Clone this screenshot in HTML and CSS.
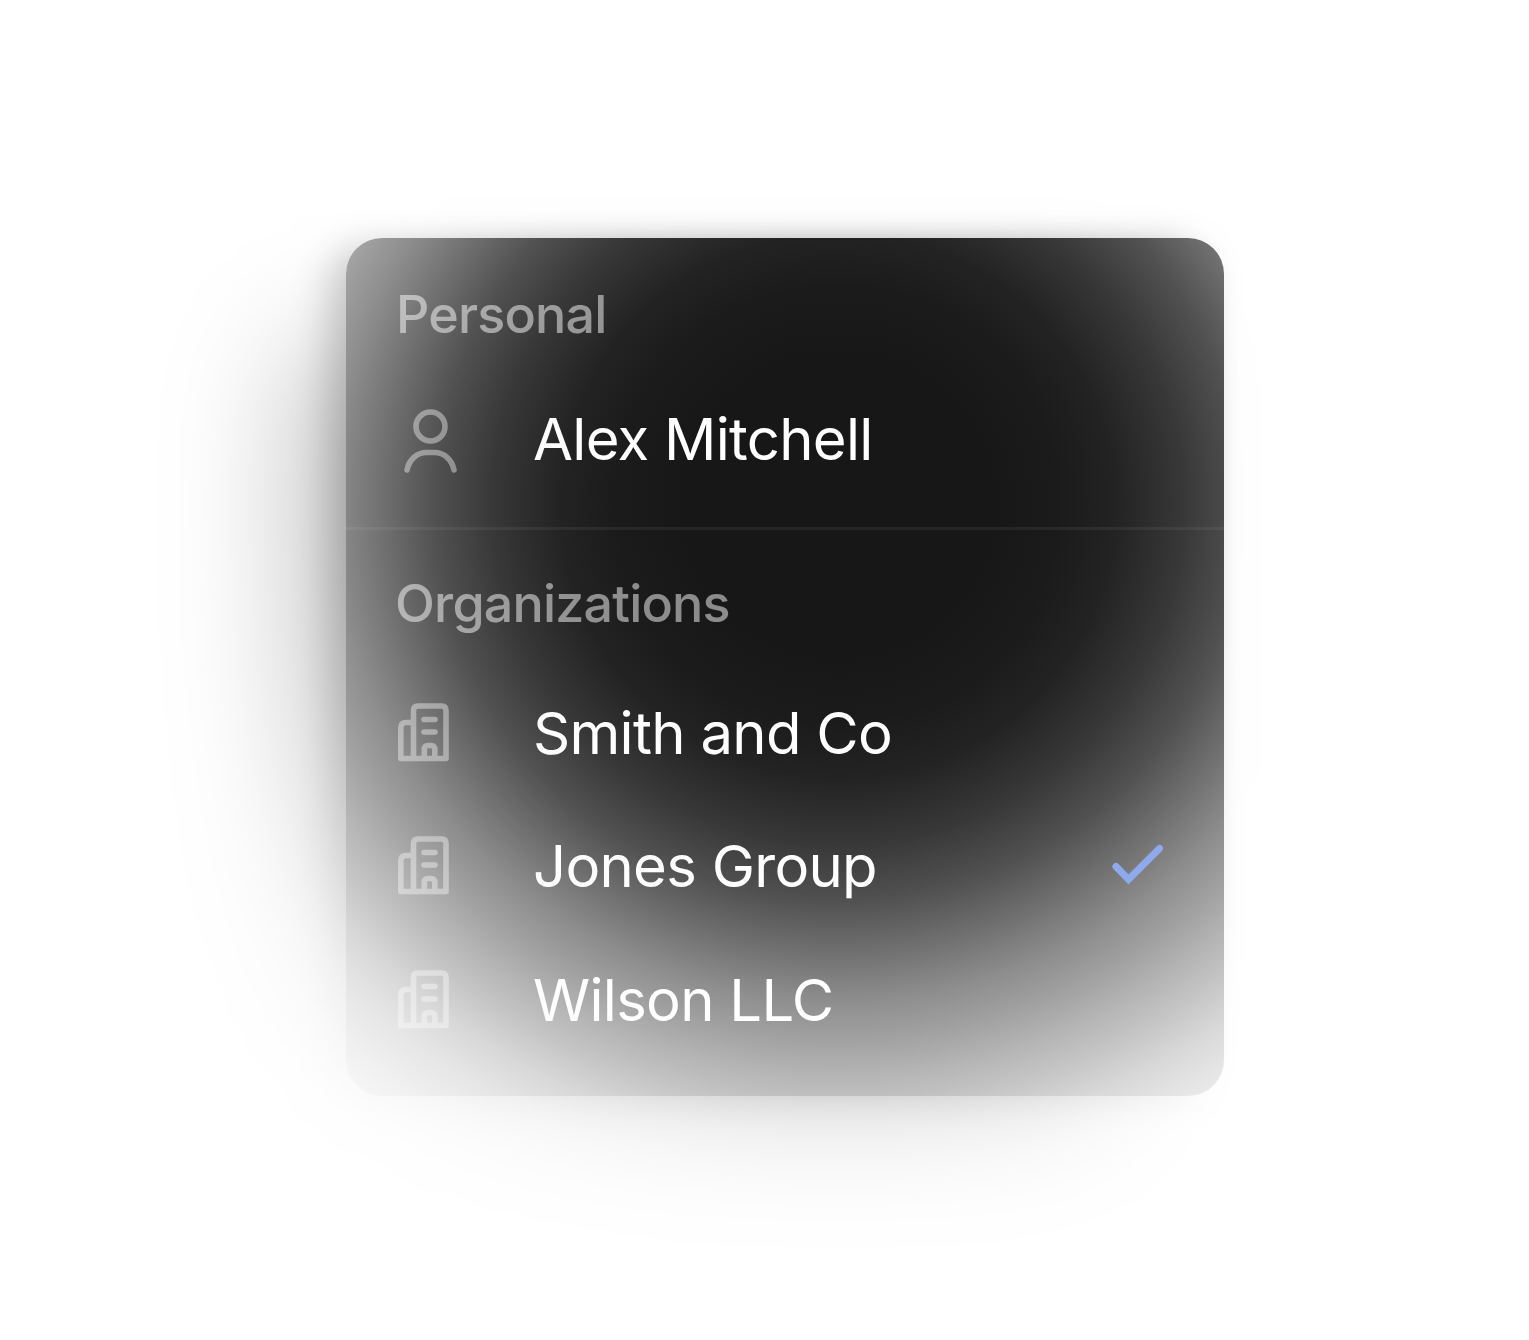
FILE: index.html
```html
<!DOCTYPE html>
<html lang="en">
<head>
    <meta charset="UTF-8">
    <title>Account Switcher</title>
    <link rel="stylesheet" href="styles.css">
</head>
<body>
    <svg class="sprite">
        <symbol id="user" viewBox="0 0 60 72">
            <circle cx="32.5" cy="23.5" r="14.5"/>
            <path d="M9 67C11 56.500 19 49.500 28.500 49.500h8c9.500 0 17.500 7 19.500 17.500"/>
        </symbol>
        <symbol id="building" viewBox="0 0 60 72">
            <path d="M2.800 61.500V31q0-5.500 5.500-5.500H15.500M15.500 61.500V13.500q0-4.500 4.500-4.500h23.500q4.500 0 4.500 4.500v48zM2.800 61.500H15.500M26 22.500h11M26 35h11M26.300 61.500v-9q0-4 4-4h2.500q4 0 4 4v9"/>
        </symbol>
    </svg>

    <div class="glow"><div class="glow-shape"></div></div>

    <div class="menu">
        <div class="section">
            <div class="label">Personal</div>
            <div class="item">
                <svg class="icon"><use href="#user"/></svg>
                <span class="name">Alex Mitchell</span>
            </div>
        </div>

        <div class="section organizations">
            <div class="label">Organizations</div>
            <div class="item">
                <svg class="icon"><use href="#building"/></svg>
                <span class="name">Smith and Co</span>
            </div>
            <div class="item">
                <svg class="icon"><use href="#building"/></svg>
                <span class="name">Jones Group</span>
                <svg class="check" viewBox="0 0 52 42"><path d="M5 22.500l12.500 13L48.500 4.500"/></svg>
            </div>
            <div class="item">
                <svg class="icon"><use href="#building"/></svg>
                <span class="name">Wilson LLC</span>
            </div>
        </div>
    </div>
</body>
</html>
```
FILE: styles.css
```css
* {
    box-sizing: border-box;
}
body {
    margin: 0;
    height: 1340px;
    padding: 238px 0 0 346px;
    background-color: #fff;
    font-family: Inter, sans-serif;
    overflow: hidden;
}
.sprite {
    display: none;
}

/* soft shadow that fades out with the menu fill */
.glow {
    position: absolute;
    inset: 0;
    padding: 238px 0 0 346px;
    mask-image: radial-gradient(842px 826px at 838px 505px, #000 18%, rgba(0,0,0,.96) 31%, rgba(0,0,0,.86) 41%, rgba(0,0,0,.76) 48%, rgba(0,0,0,.63) 54%, rgba(0,0,0,.49) 60%, rgba(0,0,0,.4) 65%, rgba(0,0,0,.32) 69%, rgba(0,0,0,.25) 73%, rgba(0,0,0,.17) 77.5%, rgba(0,0,0,.1) 82%, rgba(0,0,0,.055) 87%, rgba(0,0,0,.02) 93%, transparent);
}
.glow-shape {
    width: 878px;
    height: 858px;
    border-radius: 36px;
    box-shadow: -20px 8px 36px rgba(0,0,0,.45), -95px 90px 120px rgba(0,0,0,.37);
}

.menu {
    position: relative;
    width: 878px;
    height: 858px;
    border-radius: 36px;
    overflow: hidden;
    color: #fff;
    background: radial-gradient(842px 826px at 492px 267px, #171717 18%, rgba(23,23,23,.985) 26%, rgba(23,23,23,.95) 33%, rgba(23,23,23,.86) 41%, rgba(23,23,23,.75) 48%, rgba(23,23,23,.62) 54%, rgba(23,23,23,.49) 60%, rgba(23,23,23,.4) 65%, rgba(23,23,23,.32) 69%, rgba(23,23,23,.25) 73%, rgba(23,23,23,.17) 77.5%, rgba(23,23,23,.11) 82%, rgba(23,23,23,.065) 87%, rgba(23,23,23,.025) 93%, rgba(23,23,23,0)) #fff;
}
.section {
    padding: 18px 50px 28px;
}
.organizations {
    padding-top: 15px;
    border-top: 3px solid rgba(255,255,255,.06);
}
.label {
    height: 118px;
    margin-bottom: 4px;
    line-height: 118px;
    font-size: 52px;
    font-weight: 500;
    letter-spacing: -.8px;
    color: rgba(255,255,255,.5);
}
.organizations .label {
    margin: 0 0 9px -1px;
}
.item {
    display: flex;
    align-items: center;
    height: 121px;
}
.item + .item {
    margin-top: 12.500px;
}
.icon {
    width: 60px;
    height: 72px;
    margin: 0 75px 0 2px;
    fill: none;
    stroke: #fff;
    stroke-width: 5.600;
    stroke-linecap: round;
    stroke-linejoin: round;
    opacity: .4;
}
.name {
    font-size: 58px;
    line-height: 70px;
    letter-spacing: -.7px;
    white-space: nowrap;
}
.check {
    width: 52px;
    height: 42px;
    margin: -2px 11px 0 auto;
    fill: none;
    stroke: #8eaaec;
    stroke-width: 7;
    stroke-linecap: round;
}
```
